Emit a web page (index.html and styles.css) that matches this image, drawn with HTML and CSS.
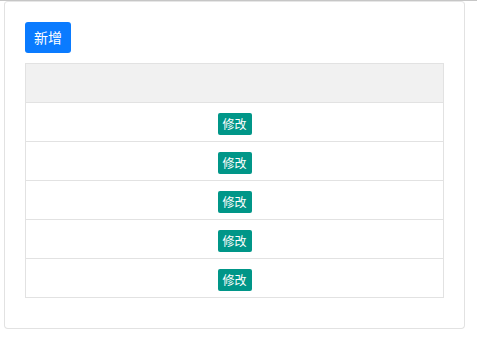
FILE: index.html
```html
<!DOCTYPE html>
<html>
<head>
    <meta charset="utf-8"/>
    <title>列表</title>
    <link rel="stylesheet" href="styles.css">
</head>
<body>

<div class="topline"></div>

<div class="card">
    <div class="toolbar">
        <button class="btn btn-add">新增</button>
    </div>

    <table class="grid">
        <thead>
            <tr><th></th></tr>
        </thead>
        <tbody>
            <tr><td><button class="btn-xs">修改</button></td></tr>
            <tr><td><button class="btn-xs">修改</button></td></tr>
            <tr><td><button class="btn-xs">修改</button></td></tr>
            <tr><td><button class="btn-xs">修改</button></td></tr>
            <tr><td><button class="btn-xs">修改</button></td></tr>
        </tbody>
    </table>
</div>

</body>
</html>
```

FILE: styles.css
```css
body {
    margin: 0;
    font-family: "Noto Sans CJK SC", "Liberation Sans", sans-serif;
    background: #fff;
}

.topline {
    height: 1px;
    background: #c6c6c6;
}

.card {
    width: 419px;
    margin: 0 0 0 4px;
    padding: 20px 20px 30px 20px;
    border: 1px solid #e2e2e2;
    border-top-color: #e6e6e6;
    border-radius: 4px;
}

.toolbar {
    height: 31px;
    margin-bottom: 10px;
}

.btn {
    height: 31px;
    padding: 0 9px;
    border: 0;
    border-radius: 3px;
    background: #0a7bff;
    color: #fff;
    font-family: inherit;
    font-size: 14px;
    line-height: 31px;
}

.grid {
    width: 419px;
    border-collapse: collapse;
}

.grid th {
    height: 38px;
    background: #f1f1f1;
    border: 1px solid #e2e2e2;
    padding: 0;
}

.grid td {
    height: 38px;
    border: 1px solid #e2e2e2;
    padding: 0;
    text-align: center;
}

.btn-xs {
    height: 22px;
    width: 34px;
    padding: 0;
    border: 0;
    border-radius: 2px;
    background: #009688;
    color: #fff;
    font-family: inherit;
    font-size: 12px;
    line-height: 22px;
    vertical-align: middle;
}
```
